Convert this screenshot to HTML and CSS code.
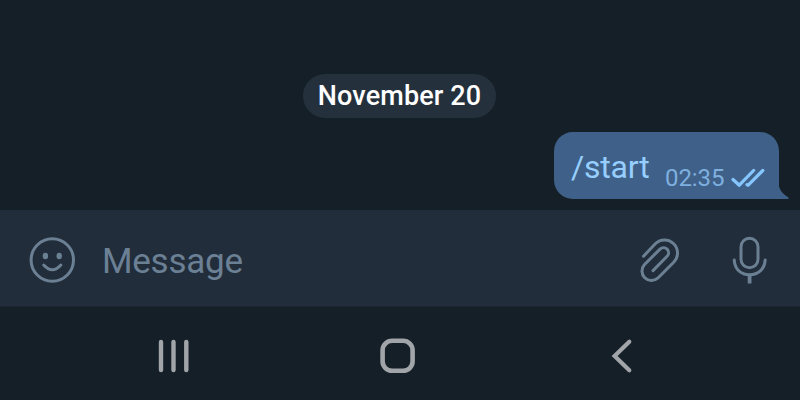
FILE: index.html
```html
<!DOCTYPE html>
<html lang="en">
<head>
<meta charset="utf-8">
<title>Chat</title>
<link rel="stylesheet" href="styles.css">
</head>
<body>
<div class="screen">
  <main class="chat">
    <div class="date">November 20</div>
    <div class="bubble">
      <span class="command">/start</span>
      <span class="time">02:35</span>
      <svg class="checks" width="34" height="20" viewBox="0 0 34 20"><path d="M2 11.5 8.3 17.2 22.6 2.5M16 16.6l1.2.6L31.8 2.5"/></svg>
      <svg class="tail" width="13" height="28" viewBox="0 0 13 28"><path d="M0 0H1V9C1.2 17 4.5 22.5 11.2 26.2Q12.6 27.8 10.5 28H0Z"/></svg>
    </div>
  </main>
  <section class="composer">
    <svg class="emoji" width="48" height="48" viewBox="0 0 48 48"><circle class="line" cx="24.3" cy="24" r="21.2"/><ellipse cx="17.4" cy="20" rx="2.7" ry="3.2"/><ellipse cx="31.2" cy="20" rx="2.7" ry="3.2"/><path class="line" d="M15.7 29Q24.3 38.5 32.9 29"/></svg>
    <span class="placeholder">Message</span>
    <svg class="clip" width="44" height="48" viewBox="638 236 44 48"><path class="line" d="M643.5 256.2 655.3 243.8A13 13 0 0 1 673.7 262.2L657.7 278.2A9.5 9.5 0 0 1 644.3 264.8L660 249.1A5 5 0 0 1 667.1 256.2L653 270.6"/></svg>
    <svg class="mic" width="40" height="50" viewBox="730 235 40 50"><rect class="line" x="741" y="238.2" width="17" height="29.6" rx="8.5"/><path class="line" d="M734.2 260C735 269.5 741 274.8 749.6 274.8S764.4 269.5 765.2 260"/><path class="stem" d="M749.6 274.5V283.5"/></svg>
  </section>
  <nav class="nav">
    <svg width="36" height="40" viewBox="0 0 36 40"><path class="bars" d="M5 6V34M17.5 6V34M30.3 6V34"/></svg>
    <svg width="40" height="40" viewBox="0 0 40 40"><rect class="home" x="2.6" y="4.8" width="30" height="30" rx="9.5"/></svg>
    <svg width="30" height="40" viewBox="0 0 30 40"><path class="back" d="M22.3 5.7 7.6 20 22.3 34.3"/></svg>
  </nav>
</div>
</body>
</html>
```
FILE: styles.css
```css
* { box-sizing: border-box; }
body { margin: 0; background: #151f27; font-family: Roboto, "Liberation Sans", sans-serif; }
.screen { width: 800px; height: 400px; display: flex; flex-direction: column; overflow: hidden; }
svg { display: block; flex: none; fill: none; stroke-linecap: round; stroke-linejoin: round; }
.chat { height: 210px; padding: 74px 21.5px 0 0; display: flex; flex-direction: column; }
.date { width: 193px; height: 43.5px; margin-left: 303px; border-radius: 22px; background: #24313d; color: #fff; font-size: 27px; font-weight: 500; letter-spacing: .12px; line-height: 44px; text-align: center; white-space: nowrap; }
.bubble { position: relative; align-self: flex-end; display: flex; width: 224.5px; height: 67px; margin-top: 14.5px; padding-left: 17px; border-radius: 19px 19px 0 19px; background: #3f6189; }
.command { width: 94px; color: #96ceff; font-size: 32px; letter-spacing: -.2px; line-height: 70px; }
.time { width: 66px; padding-top: 32px; color: #7eafdf; font-size: 24px; letter-spacing: -.1px; line-height: 29px; }
.checks { margin-top: 36px; stroke: #86c6ff; stroke-width: 3.2; }
.tail { position: absolute; right: -11.5px; bottom: 0; fill: #3f6189; }
.composer { height: 97px; padding: 0 30px 0 28px; display: flex; align-items: center; background: #212d3a; border-bottom: 1px solid #1b2632; }
.composer svg { fill: #6c8094; }
.composer .line { fill: none; stroke: #6c8094; stroke-width: 3; }
.emoji { margin-top: 3px; }
.placeholder { margin-left: 26px; margin-top: 7px; color: #6b8095; font-size: 35px; letter-spacing: -.25px; line-height: 42px; }
.clip { margin-left: auto; margin-top: 3px; }
.mic { margin-left: 48px; margin-top: 3px; }
.composer .stem { stroke: #6c8094; stroke-width: 3.8; stroke-linecap: butt; }
.nav { height: 93px; padding: 29px 163px 0 156px; display: flex; justify-content: space-between; }
.nav svg { stroke: #a1a4a8; }
.bars { stroke-width: 4.4; }
.home { stroke-width: 4.6; }
.back { stroke-width: 4.2; stroke-linejoin: miter; }
```
